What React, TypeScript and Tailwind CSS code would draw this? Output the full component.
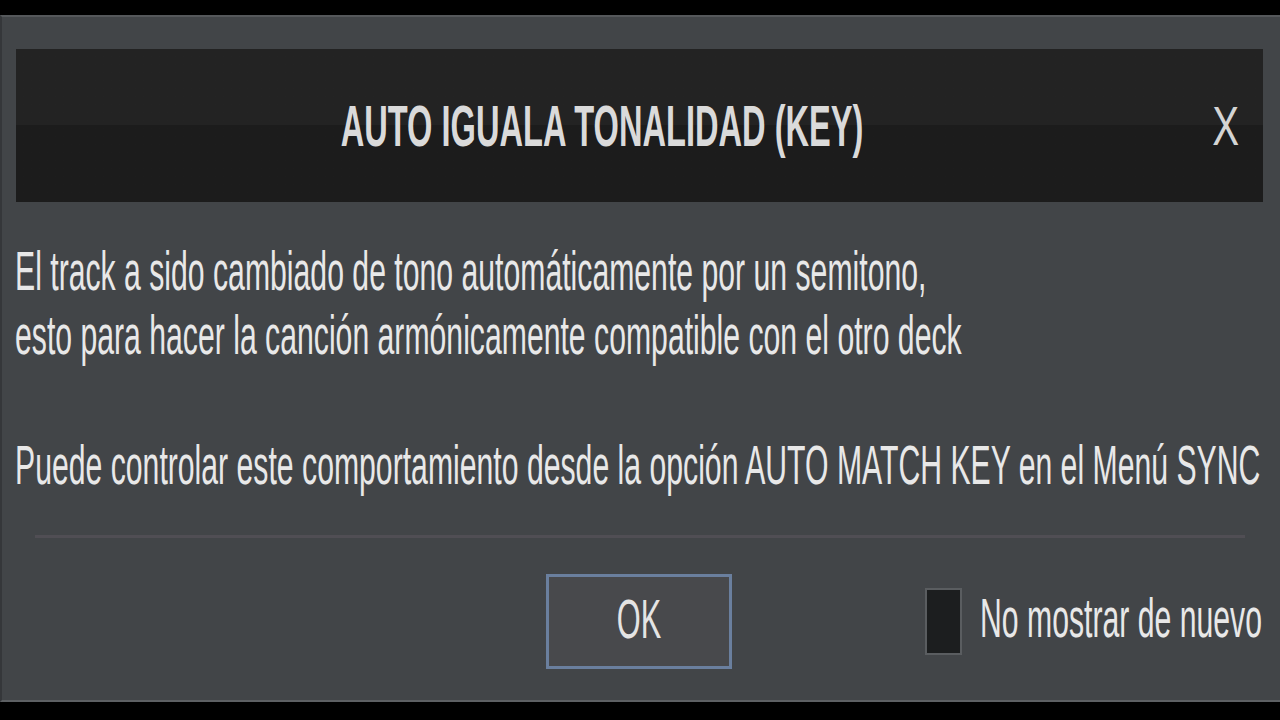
import React from "react";

export default function App() {
  return (
    <div className="w-[1280px] h-[720px] bg-black overflow-hidden pt-[15px] font-['Liberation_Sans',Arial,sans-serif]">
      <div className="h-[687px] bg-[#424548] border-t-2 border-t-[#55585b] border-b-2 border-b-[#5d6063] border-l-2 border-l-[#35373a] flex flex-col">
        {/* Header */}
        <div className="mt-[32px] ml-[14px] mr-[17px] h-[153px] flex bg-linear-to-b from-[#232323] from-50% to-[#1c1c1c] to-50%">
          <div className="flex-1 flex items-center justify-center">
            <div className="whitespace-nowrap text-[58px] leading-none font-bold text-[#dadada] origin-center scale-x-[0.562]">
              AUTO IGUALA TONALIDAD (KEY)
            </div>
          </div>
          <div className="w-[75px] flex items-center justify-center">
            <div className="text-[56px] leading-none text-[#d4d4d4] origin-center scale-x-[0.72]">X</div>
          </div>
        </div>

        {/* Body */}
        <div className="mt-[37px] pl-[13px] text-[55px] leading-[64px] text-[#e8e8e8]">
          <div className="whitespace-nowrap origin-left scale-x-[0.549]">
            El track a sido cambiado de tono automáticamente por un semitono,
          </div>
          <div className="whitespace-nowrap origin-left scale-x-[0.549]">
            esto para hacer la canción armónicamente compatible con el otro deck
          </div>
          <div className="mt-[66px] whitespace-nowrap origin-left scale-x-[0.549]">
            Puede controlar este comportamiento desde la opción AUTO MATCH KEY en el Menú SYNC
          </div>
        </div>

        {/* Separator */}
        <div className="mt-[38px] ml-[33px] mr-[35px] h-[3px] bg-[#504e54]" />

        {/* Footer */}
        <div className="mt-[36px] grid grid-cols-[544px_186px_1fr] items-center">
          <div />
          <button className="w-[186px] h-[95px] border-[3px] border-[#6a7f9e] bg-[#48494c] flex items-center justify-center pb-[6px]">
            <div className="w-full text-center text-[56px] leading-none text-[#e4e4e4] origin-center scale-x-[0.549]">
              OK
            </div>
          </button>
          <div className="flex items-center justify-end gap-[18px] pr-[16px]">
            <div className="w-[37px] h-[67px] border-2 border-[#5a5d60] bg-[#1c1e1f]" />
            <div className="w-[284px] text-[55px] leading-none text-[#e8e8e8] pb-[6px]">
              <div className="whitespace-nowrap origin-left scale-x-[0.549]">No mostrar de nuevo</div>
            </div>
          </div>
        </div>
      </div>
    </div>
  );
}
